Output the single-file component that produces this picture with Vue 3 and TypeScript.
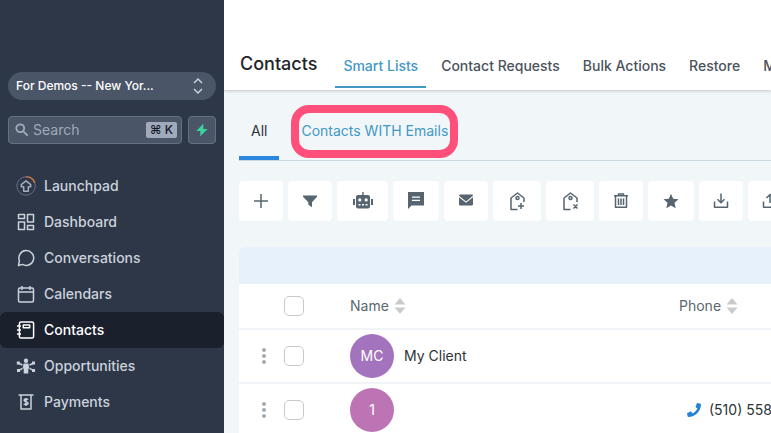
<script setup lang="ts">
import { ref } from 'vue'

interface Shape {
  d: string
  fill?: boolean
  tone?: string
}
interface NavItem {
  label: string
  shapes: Shape[]
}
interface Tool {
  label: string
  size: string
  shapes: Shape[]
}
interface Contact {
  initials: string
  name: string
  phone: string
  tone: string
}

const navItems: NavItem[] = [
  {
    label: 'Launchpad',
    shapes: [
      { d: 'M10 .8a9.2 9.2 0 1 0 9.2 9.2a9.2 9.2 0 0 0-.4-3', tone: 'ring' },
      { d: 'M10 .8a9.2 9.2 0 0 1 8.8 6.2', tone: 'progress' },
      { d: 'M10 4.8 5.3 8.7v2.1h2.4v4.4h4.6v-4.4h2.4V8.7Z', tone: 'arrow' },
    ],
  },
  {
    label: 'Dashboard',
    shapes: [
      { d: 'M2.5 2.5h6v4h-6ZM11.5 2.5h6v7.5h-6ZM2.5 10h6v7.5h-6ZM11.5 13.5h6v4h-6Z' },
    ],
  },
  {
    label: 'Conversations',
    shapes: [
      { d: 'M2.5 17.5l.9-4.8a7.4 7.4 0 1 1 3.2 3.7Z' },
    ],
  },
  {
    label: 'Calendars',
    shapes: [
      { d: 'M4 4h12a1.5 1.5 0 0 1 1.5 1.5v11A1.5 1.5 0 0 1 16 18H4a1.5 1.5 0 0 1-1.5-1.5v-11A1.5 1.5 0 0 1 4 4ZM2.5 8h15M6 2v4M14 2v4' },
    ],
  },
  {
    label: 'Contacts',
    shapes: [
      { d: 'M5 2h11a1.6 1.6 0 0 1 1.6 1.6v12.8A1.6 1.6 0 0 1 16 18H5a1.6 1.6 0 0 1-1.6-1.6V3.6A1.6 1.6 0 0 1 5 2ZM7.3 5h6.4v2.8H7.3ZM1 6h4M1 10h4M1 14h4' },
    ],
  },
  {
    label: 'Opportunities',
    shapes: [
      { d: 'M10 2.6a2.2 2.2 0 1 1 0 4.4 2.2 2.2 0 0 1 0-4.4ZM7.6 7.6h4.8l1 5h-1.1v4.8H7.7v-4.8H6.6ZM.8 5.5h3v3h-3ZM1 13h3v3H1ZM16 5.5h3v3h-3ZM16 13h3v3h-3Z', fill: true },
      { d: 'M2.5 7.2 6.5 9M3 14.3l3.5-2M17.5 7.2l-4 1.8M17.5 14.3l-4-2' },
    ],
  },
  {
    label: 'Payments',
    shapes: [
      { d: 'M2.5 3h15M5 3v14h10V3M12.1 7.6c-.5-.7-3.8-1.1-4 .6-.1 1.7 4 1.2 4 3.1 0 1.8-3.5 1.5-4.3.5M10 6v8' },
    ],
  },
]

const sections = ['Smart Lists', 'Contact Requests', 'Bulk Actions', 'Restore', 'M']

const tag = 'M10.5 18.5H4V7l6.500-5 6.500 5v4M10.500 5.500a1.500 1.500 0 1 1 0 3 1.500 1.500 0 0 1 0-3'

const tools: Tool[] = [
  { label: 'Add contact', size: 'small', shapes: [{ d: 'M10 3v14M3 10h14' }] },
  { label: 'Filter', size: 'small', shapes: [{ d: 'M3 4.5h14v1.3L12 11.3v5l-3.7-2.500v-2.500L3 5.8Z', fill: true }] },
  {
    label: 'Automation',
    size: 'wide',
    shapes: [
      { d: 'M9.3 1h1.4v3H15a2 2 0 0 1 2 2v9.5a2 2 0 0 1-2 2H5a2 2 0 0 1-2-2V6a2 2 0 0 1 2-2h4.3ZM0 8h2v6H0ZM18 8h2v6h-2ZM6.8 7.3a1.6 1.6 0 1 0 0 3.2 1.6 1.6 0 0 0 0-3.2ZM13.2 7.3a1.6 1.6 0 1 0 0 3.2 1.6 1.6 0 0 0 0-3.2ZM5.5 13v1.5h2V13ZM9 13v1.5h2V13ZM12.5 13v1.5h2V13Z', fill: true },
    ],
  },
  { label: 'Send SMS', size: 'medium', shapes: [{ d: 'M2 1h16v13.5H5.5L2 18ZM6 5.4v1.3h8V5.4ZM6 8.7V10h8V8.7Z', fill: true }] },
  { label: 'Send email', size: 'small', shapes: [{ d: 'M4.3 3.5h11.4A1.3 1.3 0 0 1 17 4.8L10 10.4 3 4.8a1.3 1.3 0 0 1 1.3-1.3ZM3 6.2l7 5.6 7-5.6v7A1.3 1.3 0 0 1 15.7 14.5H4.3A1.3 1.3 0 0 1 3 13.2Z', fill: true }] },
  { label: 'Add tag', size: 'large', shapes: [{ d: tag + 'M14 12v6M11 15h6' }] },
  { label: 'Remove tag', size: 'large', shapes: [{ d: tag + 'M13.5 13.500l4 4M17.500 13.500l-4 4' }] },
  { label: 'Delete', size: 'small', shapes: [{ d: 'M4.5 5.5v10.7h11V5.5M3 4.7h14M7.5 4V3h5v1M7.5 7.5V14M10 7.5V14M12.5 7.5V14' }] },
  { label: 'Review request', size: 'medium', shapes: [{ d: 'm10 2.800 2.200 4.900 5.300.6-4 3.500 1.200 5.400L10 14.500l-4.700 2.700 1.200-5.400-4-3.500 5.300-.6Z', fill: true }] },
  { label: 'Import', size: 'small', shapes: [{ d: 'M3.5 10.5v5.7h13v-5.7M10 2.5v9M6.5 8.3 10 11.8l3.5-3.5' }] },
  { label: 'Export', size: 'small', shapes: [{ d: 'M3.5 10.5v5.7h13v-5.7M10 12V3.5M6.5 7 10 3.5 13.5 7' }] },
]

const contacts: Contact[] = [
  { initials: 'MC', name: 'My Client', phone: '', tone: 'violet' },
  { initials: '1', name: '', phone: '(510) 558', tone: 'orchid' },
]

const search = ref('')
const current = ref('Contacts')
const section = ref('Smart Lists')
</script>

<template>
  <div class="app">
    <aside class="sidebar">
      <button class="location" type="button">
        <span>For Demos -- New Yor...</span>
        <svg class="chevrons" viewBox="0 0 12 18"><path d="m2 6 4-4 4 4M2 12l4 4 4-4" /></svg>
      </button>
      <div class="search-row">
        <label class="search">
          <svg class="lens" viewBox="0 0 16 16"><circle cx="6" cy="6" r="4.5" /><path d="m9.500 9.500 5 5" /></svg>
          <input v-model="search" type="text" placeholder="Search" aria-label="Search" />
          <kbd>⌘ K</kbd>
        </label>
        <button class="quick" type="button" aria-label="Quick actions">
          <svg viewBox="0 0 14 14"><path d="M8.300.8 1.300 8h4v5.200L12.700 6H8.300Z" /></svg>
        </button>
      </div>
      <nav class="menu">
        <a
          v-for="item in navItems"
          :key="item.label"
          href="#"
          :class="{ active: item.label === current }"
          @click.prevent="current = item.label"
        >
          <svg class="icon" viewBox="0 0 20 20">
            <path v-for="(s, i) in item.shapes" :key="i" :d="s.d" :class="[{ solid: s.fill }, s.tone]" />
          </svg>
          {{ item.label }}
        </a>
      </nav>
    </aside>

    <main class="main">
      <header class="topbar">
        <h1>Contacts</h1>
        <nav class="sections">
          <a
            v-for="name in sections"
            :key="name"
            href="#"
            :class="{ active: name === section }"
            @click.prevent="section = name"
          >{{ name }}</a>
        </nav>
      </header>

      <nav class="lists">
        <a class="all" href="#">All</a>
        <a class="marked" href="#">Contacts WITH Emails</a>
      </nav>

      <div class="tools">
        <button v-for="tool in tools" :key="tool.label" type="button" :class="tool.size" :aria-label="tool.label">
          <svg class="icon" viewBox="0 0 20 20">
            <path v-for="(s, i) in tool.shapes" :key="i" :d="s.d" :class="{ solid: s.fill }" />
          </svg>
        </button>
      </div>

      <section class="panel">
        <div class="band"></div>
        <table>
          <colgroup>
            <col class="col-more" />
            <col class="col-check" />
            <col class="col-name" />
            <col />
          </colgroup>
          <thead>
            <tr>
              <th></th>
              <th><input type="checkbox" aria-label="Select all" /></th>
              <th>
                <span class="sortable">Name
                  <svg class="sort" viewBox="0 0 12 16"><path d="m6 0 5.500 6.500H.5ZM.5 9.500h11L6 16Z" /></svg>
                </span>
              </th>
              <th>
                <span class="sortable">Phone
                  <svg class="sort" viewBox="0 0 12 16"><path d="m6 0 5.500 6.500H.5ZM.5 9.500h11L6 16Z" /></svg>
                </span>
              </th>
            </tr>
          </thead>
          <tbody>
            <tr v-for="c in contacts" :key="c.initials">
              <td>
                <button class="more" type="button" aria-label="More">
                  <svg viewBox="0 0 4 16"><circle cx="2" cy="2" r="2" /><circle cx="2" cy="8" r="2" /><circle cx="2" cy="14" r="2" /></svg>
                </button>
              </td>
              <td><input type="checkbox" :aria-label="'Select ' + c.initials" /></td>
              <td>
                <div class="person"><span class="avatar" :class="c.tone">{{ c.initials }}</span>{{ c.name }}</div>
              </td>
              <td>
                <a v-if="c.phone" class="phone" href="#">
                  <svg viewBox="0 0 512 512"><path d="M493.400 24.600l-104-24c-11.300-2.600-22.900 3.300-27.500 13.900l-48 112c-4.200 9.800-1.400 21.300 6.900 28l60.600 49.600c-36 76.700-98.900 140.500-177.200 177.200l-49.600-60.600c-6.800-8.300-18.200-11.100-28-6.900l-112 48C3.900 366.500-2 378.100.6 389.400l24 104C27.100 504.200 36.700 512 48 512c256.100 0 464-207.500 464-464 0-11.200-7.700-20.900-18.600-23.400z" /></svg>
                  {{ c.phone }}
                </a>
              </td>
            </tr>
          </tbody>
        </table>
      </section>
    </main>
  </div>
</template>

<style>
body {
  overflow: hidden;
}
</style>

<style scoped>
* {
  box-sizing: border-box;
}
.app {
  display: flex;
  height: 100vh;
  overflow: hidden;
  background: #f1f6f9;
  color: #2d3338;
  font: 14px/20px Inter, 'Liberation Sans', sans-serif;
}
button,
input {
  font: inherit;
}
button {
  border: 0;
  padding: 0;
  cursor: pointer;
}
a {
  color: inherit;
  text-decoration: none;
}
svg {
  flex: none;
  display: block;
}
.icon {
  width: 20px;
  height: 20px;
  fill: none;
  stroke: currentColor;
  stroke-width: 1.5;
  stroke-linejoin: round;
}
.icon .solid {
  fill: currentColor;
  stroke: none;
  fill-rule: evenodd;
}

.sidebar {
  flex: none;
  width: 224px;
  padding-top: 72px;
  background: #2d3748;
  color: #cbd2dc;
}
.location {
  display: flex;
  align-items: center;
  justify-content: space-between;
  width: calc(100% - 16px);
  height: 28px;
  margin: 0 8px 16px;
  padding: 0 12px 0 8px;
  border-radius: 14px;
  background: #4a5568;
  color: #fff;
  font-size: 12px;
  font-weight: 500;
}
.chevrons {
  width: 12px;
  height: 18px;
  fill: none;
  stroke: #cbd2dc;
  stroke-width: 1.5;
}
.search-row {
  display: flex;
  gap: 6px;
  padding: 0 8px;
  margin-bottom: 24px;
}
.search {
  display: flex;
  align-items: center;
  flex: 1;
  min-width: 0;
  height: 28px;
  padding: 0 4px 0 6px;
  gap: 4px;
  border: 1px solid #667085;
  border-radius: 4px;
  background: #4a5568;
}
.lens {
  width: 14px;
  height: 14px;
  fill: none;
  stroke: #a3adbb;
  stroke-width: 2;
}
.search input {
  flex: 1;
  min-width: 0;
  width: 0;
  padding: 0;
  border: 0;
  outline: 0;
  background: transparent;
  color: #fff;
}
.search input::placeholder {
  color: #a0aabb;
  opacity: 1;
}
kbd {
  padding: 0 4px;
  border-radius: 2px;
  background: #a0aabb;
  color: #111827;
  font: 500 12px/16px Inter, 'DejaVu Sans', sans-serif;
}
.quick {
  display: grid;
  place-items: center;
  width: 28px;
  height: 28px;
  border: 1px solid #667085;
  border-radius: 4px;
  background: #4a5568;
}
.quick svg {
  width: 14px;
  height: 14px;
  fill: #38d39f;
}
.menu a {
  display: flex;
  align-items: center;
  gap: 8px;
  height: 36px;
  padding-left: 16px;
  border-radius: 6px;
  font-weight: 500;
}
.menu a.active {
  background: #1a202c;
  color: #fff;
}
.ring {
  stroke: #667085;
  stroke-width: 1;
}
.progress {
  stroke: #c77b45;
}
.arrow {
  stroke: #a3adbb;
}

.main {
  flex: 1;
  min-width: 0;
  overflow: hidden;
}
.topbar {
  display: flex;
  align-items: flex-end;
  gap: 18px;
  height: 90px;
  padding: 0 0 2px 16px;
  background: #fff;
  box-shadow: 0 1px 3px rgba(0, 0, 0, 0.2);
}
h1 {
  margin: 0;
  padding-bottom: 12px;
  color: #1f2429;
  font-size: 18px;
  line-height: 24px;
  font-weight: 500;
}
.sections {
  display: flex;
  gap: 7px;
}
.sections a {
  padding: 0 8px 10px;
  border-bottom: 2px solid transparent;
  color: #4b535b;
  font-weight: 500;
  white-space: nowrap;
}
.sections a.active {
  border-color: #4299c4;
  color: #4299c4;
}
.lists {
  display: flex;
  align-items: flex-end;
  gap: 12px;
  height: 71px;
  margin-left: 15px;
  border-bottom: 1px solid #ccd8e0;
}
.all {
  padding: 0 12px 15px;
  border-bottom: 4px solid #2b87dd;
}
.marked {
  margin-bottom: 2px;
  padding: 8px 2px 9px;
  border: 8px solid #ff4f7b;
  border-radius: 18px;
  color: #4299c4;
  white-space: nowrap;
}
.tools {
  display: flex;
  gap: 5px;
  margin: 20px 0 26px 15px;
}
.tools button {
  display: grid;
  place-items: center;
  flex: none;
  width: 44px;
  height: 40px;
  border-radius: 4px;
  background: #fff;
  color: #56656f;
}
.tools .medium {
  width: 46px;
}
.tools .large {
  width: 48px;
}
.tools .wide {
  width: 51px;
}
.panel {
  margin-left: 15px;
  border-radius: 6px 0 0 0;
  background: #fff;
  overflow: hidden;
}
.band {
  height: 37px;
  background: #e6f1fc;
}
table {
  width: 100%;
  table-layout: fixed;
  border-collapse: separate;
  border-spacing: 0;
}
.col-more {
  width: 45px;
}
.col-check {
  width: 66px;
}
.col-name {
  width: 329px;
}
th,
td {
  padding: 0;
  border-bottom: 2px solid #f0f4f6;
  text-align: left;
  vertical-align: middle;
  overflow: hidden;
}
th {
  height: 46px;
  color: #5b6770;
  font-weight: 400;
}
td {
  height: 54px;
}
input[type='checkbox'] {
  display: block;
  appearance: none;
  width: 20px;
  height: 20px;
  margin: 0;
  border: 1px solid #c6cacf;
  border-radius: 5px;
  background: #fff;
}
.sortable {
  display: flex;
  align-items: center;
  gap: 5px;
}
.sort {
  width: 12px;
  height: 16px;
  fill: #cbcbcb;
}
.more {
  display: block;
  margin-left: 23px;
  background: transparent;
}
.more svg {
  width: 4px;
  height: 16px;
  fill: #a3abb2;
}
.person {
  display: flex;
  align-items: center;
  gap: 10px;
}
.avatar {
  display: grid;
  place-items: center;
  width: 44px;
  height: 44px;
  border-radius: 50%;
  color: #fff;
}
.violet {
  background: #a374bd;
}
.orchid {
  background: #bc74b5;
}
.phone {
  display: flex;
  align-items: center;
  gap: 8px;
  padding-left: 8px;
  white-space: nowrap;
}
.phone svg {
  width: 14px;
  height: 14px;
  fill: #2583d3;
}
</style>
